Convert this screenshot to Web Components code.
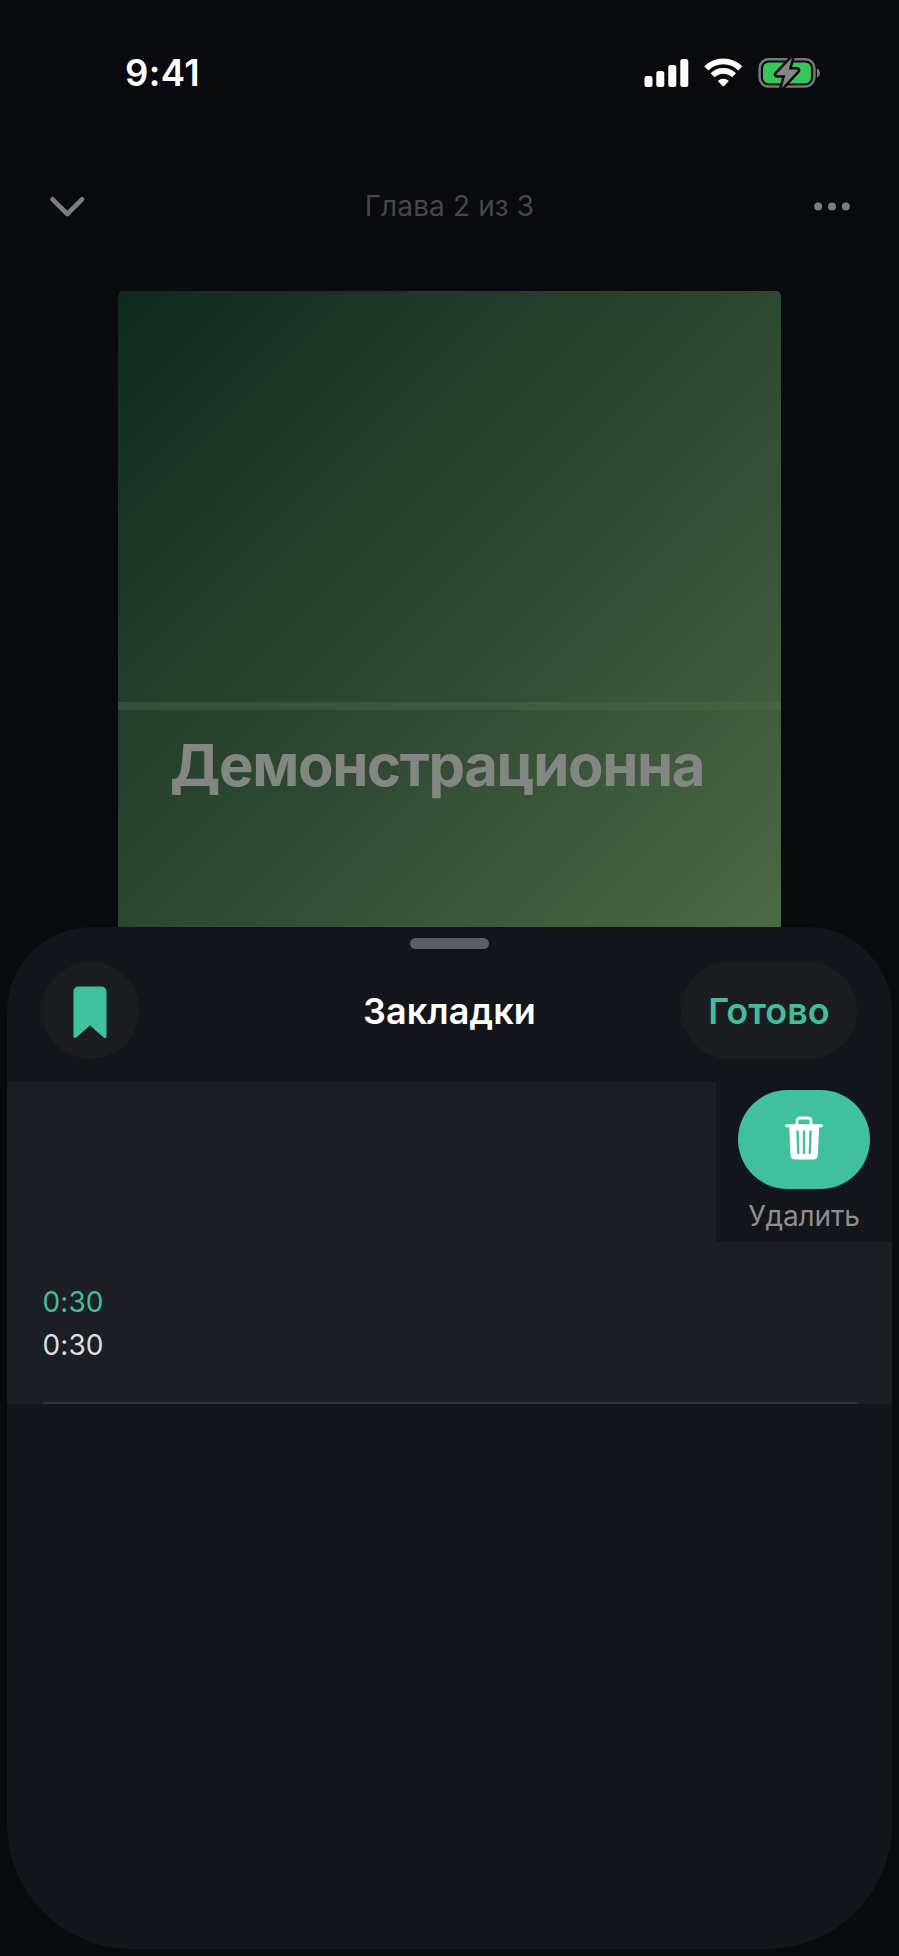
<!DOCTYPE html>
<html lang="ru">
<head>
<meta charset="utf-8">
<title>Закладки</title>
<style>
html,body{margin:0;background:#0a0b0f}
body{font-family:Inter,"Noto Sans",sans-serif}
</style>
</head>
<body>
<player-screen></player-screen>
<script>
const define = (name, html) => customElements.define(name, class extends HTMLElement {
  constructor() {
    super();
    this.attachShadow({ mode: 'open' }).innerHTML = html;
  }
});

/* A single unwrapped line of text */
define('text-line', `<style>
:host{display:block;white-space:nowrap;line-height:1;font-kerning:normal}
</style><slot></slot>`);

define('status-bar', `<style>
:host{display:flex;height:146px;box-sizing:border-box;padding:55px 79px 0 125px;justify-content:space-between;align-items:flex-start;color:#fff}
text-line{font-size:36.5px;font-weight:600;letter-spacing:.4px;line-height:37px}
svg{display:block;margin-top:1px}
</style>
<text-line>9:41</text-line>
<svg width="177" height="34" viewBox="643 56 177 34">
<g fill="#fff"><rect x="644.5" y="76" width="8" height="11" rx="2.5"/><rect x="656.3" y="71" width="8" height="16" rx="2.5"/><rect x="668.3" y="65" width="8" height="22" rx="2.5"/><rect x="680.3" y="59" width="8" height="28" rx="2.5"/></g>
<g fill="none" stroke="#fff" stroke-width="5.8"><path d="M706.3 68.300a24.500 24.500 0 0 1 34 0"/><path d="M712.600 75.200a15.300 15.300 0 0 1 21.400 0"/></g>
<path d="M717.800 81a8 8 0 0 1 11 0l-4.700 4.900q-.8.7-1.600 0z" fill="#fff"/>
<rect x="759.600" y="59.300" width="54.800" height="27.300" rx="9" fill="none" stroke="#77787b" stroke-width="2.500"/>
<path d="M817 68.500q3 1.500 3 4.500t-3 4.500z" fill="#77787b"/>
<rect x="763" y="62.600" width="48" height="20.800" rx="6" fill="#34c759"/>
<path d="M792 57.800l-15.500 16.200q-.8 1.200.8 1.200h8l-3.600 12.800 16-17.200q.7-1.200-.7-1.200h-8.200z" fill="#858688" stroke="#0a0b0f" stroke-width="5" paint-order="stroke" stroke-linejoin="round"/>
</svg>`);

define('player-header', `<style>
:host{display:flex;height:145px;box-sizing:border-box;padding:40px 48px 0;justify-content:space-between;align-items:flex-start}
svg{display:block;height:40px;width:38px}
text-line{font-size:28px;line-height:41px;color:#47484b;letter-spacing:.12px}
</style>
<svg viewBox="48 186 38 40"><path d="M52.500 199.300 67.300 214 82 199.300" fill="none" stroke="#7c7d80" stroke-width="4.600" stroke-linecap="round" stroke-linejoin="round"/></svg>
<text-line>Глава 2 из 3</text-line>
<svg viewBox="813 186 38 40" fill="#7c7d80"><circle cx="818.200" cy="206.500" r="4"/><circle cx="832" cy="206.500" r="4"/><circle cx="845.800" cy="206.500" r="4"/></svg>`);

define('book-cover', `<style>
:host{display:flex;flex-direction:column;width:663px;height:663px;margin:0 auto;border-radius:5px;overflow:hidden;background:linear-gradient(135deg,#0d2a1f 0%,#203b2a 27%,#2d4830 50%,#3b563a 72%,#4e6b46 100%)}
.band{margin-top:411px;height:8px;background:linear-gradient(90deg,#34503a,#3e5a3e 55%,#486342);flex:none}
text-line{margin:20px 0 0 52px;font-size:58px;font-weight:700;line-height:70px;color:#848683;letter-spacing:-1.35px}
</style><div class="band"></div><text-line><slot></slot></text-line>`);

define('tool-button', `<style>
:host{display:flex;align-items:center;justify-content:center;box-sizing:border-box;height:97px;border-radius:49px;background:#1b1d21;color:#45bc98}
</style><slot></slot>`);

define('sheet-header', `<style>
:host{display:flex;flex-direction:column;align-items:center;height:155px}
.grab{width:79px;height:11px;border-radius:6px;background:#5b5e62;margin-top:11px;flex:none}
.bar{display:grid;grid-template-columns:176px 1fr 176px;align-items:center;align-self:stretch;margin:13px 35px 0}
tool-button:first-child{width:97px}
.title{font-size:36px;font-weight:600;color:#fff;justify-self:center;letter-spacing:.1px}
.done{font-size:36px;font-weight:600}
svg{display:block;margin:3px 1px 0 0}
</style>
<div class="grab"></div>
<div class="bar">
<tool-button><svg width="34" height="53" viewBox="0 0 34 53"><path d="M6 .500h22q5.500 0 5.500 5.500v44q0 3-2.800 1.500L17 39.500 3.300 51.500Q.5 53 .5 50V6Q.5.500 6 .500z" fill="#40c09c"/></svg></tool-button>
<text-line class="title">Закладки</text-line>
<tool-button><text-line class="done">Готово</text-line></tool-button>
</div>`);

define('swipe-action', `<style>
:host{display:flex;flex-direction:column;align-items:center;width:176px;height:160px;background:#13161a}
.pill{display:flex;align-items:center;justify-content:center;width:132px;height:99px;margin-top:8px;border-radius:50px;background:#40c09c}
text-line{font-size:28px;color:#8d8e92;margin-top:10px;line-height:35px;letter-spacing:-.15px}
svg{display:block;margin-top:-3px}
</style>
<div class="pill"><svg width="38" height="44" viewBox="0 0 38 44">
<path d="M12 9V5q0-3 3.500-3h7q3.500 0 3.500 3v4" fill="none" stroke="#fff" stroke-width="2.800"/>
<path d="M1.500 9.800h35" stroke="#fff" stroke-width="2.900" stroke-linecap="round"/>
<path d="M4.200 9h30L32.800 39q-.3 4.500-4.800 4.500H10.300q-4.500 0-4.800-4.500z" fill="#fff"/>
<path d="M12.500 15.500l.8 21.500M19 15.500V37M25.600 15.500L24.800 37" stroke="#40c09c" stroke-width="2.400" stroke-linecap="round"/></svg></div>
<text-line><slot></slot></text-line>`);

define('bookmark-list', `<style>
:host{display:flex;flex-direction:column;height:322px;background:#1c1f24}
swipe-action{align-self:flex-end;flex:none}
.times{margin:43px 0 0 35.500px;font-size:28px;color:#dddee2}
text-line{line-height:34px;letter-spacing:.1px}
.times text-line:first-child{color:#45bc98;margin-bottom:9px}
.sep{height:2px;background:#33373c;margin:auto 35px 0 36px}
</style>
<swipe-action>Удалить</swipe-action>
<div class="times"><text-line>0:30</text-line><text-line>0:30</text-line></div>
<div class="sep"></div>`);

define('bottom-sheet', `<style>
:host{display:block;position:absolute;left:7px;top:927px;width:885px;height:1022px;overflow:hidden;border-radius:85px 85px 125px 125px;background:#13161a}
</style><sheet-header></sheet-header><bookmark-list></bookmark-list>`);

define('player-screen', `<style>
:host{display:block;position:relative;width:899px;height:1956px;overflow:hidden;background:#0a0b0f}
</style>
<status-bar></status-bar><player-header></player-header><book-cover>Демонстрационна</book-cover><bottom-sheet></bottom-sheet>`);
</script>
</body>
</html>
